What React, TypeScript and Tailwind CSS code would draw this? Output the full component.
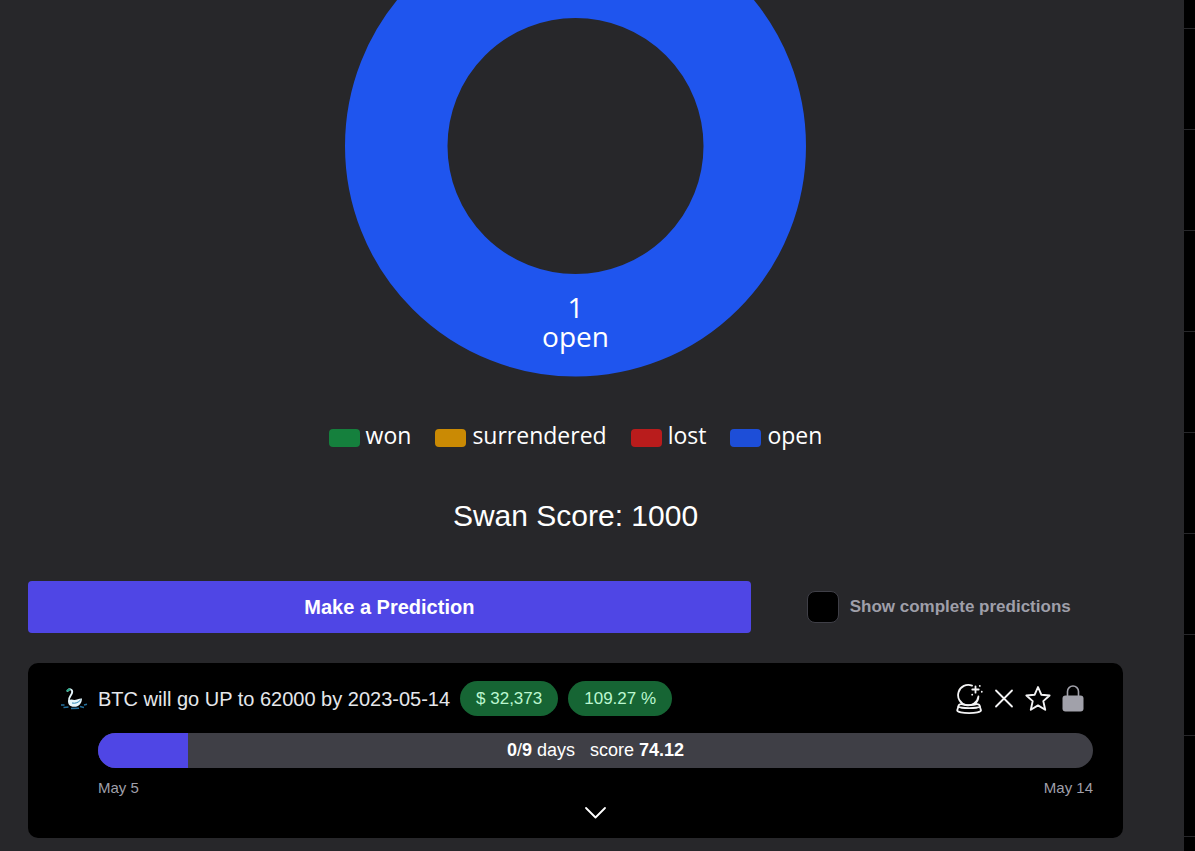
import { useState } from "react";

type Status = { label: string; color: string };

const STATUSES: Status[] = [
  { label: "won", color: "bg-[#15803d]" },
  { label: "surrendered", color: "bg-[#ca8a04]" },
  { label: "lost", color: "bg-[#b91c1c]" },
  { label: "open", color: "bg-[#1d4ed8]" }
];

const GRID_ROWS = [1, 2, 3, 4, 5, 6, 7, 8];

function StatusChart() {
  return (
    <svg viewBox="0 0 461 377" className="block w-[461px] text-[28px]" role="img" aria-label="1 open">
      <circle cx="230.5" cy="146" r="179.25" fill="none" stroke="#1f55ee" strokeWidth="102.5" />
      <text fill="#fff" textAnchor="middle" fontFamily="'Open Sans', 'Noto Sans', sans-serif">
        <tspan x="230.5" y="318">1</tspan>
        <tspan x="230.5" y="347">open</tspan>
      </text>
    </svg>
  );
}

function Legend() {
  return (
    <ul className="mt-10 flex justify-center gap-6 font-['Open_Sans','Noto_Sans',sans-serif] text-[23px] leading-9 text-white">
      {STATUSES.map((s) => (
        <li key={s.label} className="flex items-center gap-[6px]">
          <span className={`mt-[6px] h-[18px] w-[31px] rounded ${s.color}`} />
          {s.label}
        </li>
      ))}
    </ul>
  );
}

function SwanIcon() {
  return (
    <svg viewBox="0 0 28 24" className="h-6 w-7 shrink-0" fill="none" aria-hidden="true">
      <path d="M7.500 4C9.500.8 13 2.500 12 6c-.8 2.800-3.800 4.500-3 8" stroke="#e6f6fc" strokeWidth="1.900" strokeLinecap="round" />
      <path d="M8.200 13.500c1.800-1.300 4.300-1.200 6-.5 2.500-.2 5-1.800 7.800-1.500-.2 5-3 8.300-7.800 8.300-4.500 0-6.700-3-6-6.300z" fill="#e6f6fc" />
      <path d="M12 16c3.500.8 6.500-.6 8.500-3" stroke="#2c87b5" strokeWidth="1" />
      <path d="M6.800 4.200L10 1.800" stroke="#2aa88a" strokeWidth="2.200" />
      <path d="M1 18h3.500M3.500 20.500l5-.5M11 21.500l8-.2M20 19.500l4 1M24 18l3-.7" stroke="#246f9c" strokeWidth="1.400" />
    </svg>
  );
}

function CrystalBallIcon() {
  return (
    <svg viewBox="0 0 28 32" className="h-8 w-7" fill="none" stroke="#f4f4f5" strokeWidth="1.800" strokeLinecap="round" strokeLinejoin="round" aria-hidden="true">
      <path d="M17 2.600A10.200 10.200 0 1 0 23.400 13.500c0 3-1.200 5.200-3.600 7.400" />
      <path d="M6.500 21.200C4 21.200 3.500 22 3.400 23.500c2.800 2.200 18.600 2.200 21.400 0-.1-1.500-.6-2.300-3.100-2.300" />
      <path d="M3.400 23.500l-1.200 3.800c-.2 3.700 24 3.700 23.800 0l-1.200-3.800" />
      <path d="M6.500 21.200c3.500 1.200 11.700 1.200 15.200 0" />
      <path d="M20.500 3.300v6.400M17.300 6.500h6.400" />
      <path d="M24.800 2.800v.1M26.800 8.700v.1M17.200 11.600v.1" />
    </svg>
  );
}

function CloseIcon() {
  return (
    <svg viewBox="0 0 20 20" className="h-5 w-5" fill="none" stroke="#f4f4f5" strokeWidth="1.800" strokeLinecap="round" aria-hidden="true">
      <path d="M2 1.500l16 16M18 1.500l-16 16" />
    </svg>
  );
}

function StarIcon() {
  return (
    <svg viewBox="0 0 26 26" className="h-[26px] w-[26px]" fill="none" stroke="#f4f4f5" strokeWidth="1.900" strokeLinejoin="round" aria-hidden="true">
      <path d="M13 1l3.300 7.700 8.300.8-6.300 5.600 1.900 8.700L13 19.400l-7.200 4.400 1.900-8.700L1.400 9.500l8.300-.8z" />
    </svg>
  );
}

function LockIcon() {
  return (
    <svg viewBox="0 0 22 28" className="h-7 w-[22px]" aria-hidden="true">
      <path d="M5.500 12V6.500a5.500 5.500 0 0 1 11 0V12" fill="none" stroke="#a1a1aa" strokeWidth="1.600" />
      <rect x=".5" y="10.500" width="21" height="16" rx="3" fill="#a1a1aa" />
    </svg>
  );
}

function Badge({ children }: { children: string }) {
  return (
    <span className="ml-[10px] rounded-full bg-[#166534] px-4 text-[17px] leading-[35px] text-[#bbf7d0]">
      {children}
    </span>
  );
}

function PredictionCard({ progress }: { progress: number }) {
  return (
    <article className="mt-[30px] rounded-[10px] bg-black pt-[18px] pr-[30px] pb-4 pl-8">
      <div className="flex items-center">
        <SwanIcon />
        <h2 className="ml-[10px] text-[20px] text-gray-200">BTC will go UP to 62000 by 2023-05-14</h2>
        <Badge>$ 32,373</Badge>
        <Badge>109.27 %</Badge>
        <div className="mr-[9px] ml-auto flex items-center gap-[11px]">
          <button aria-label="Predict"><CrystalBallIcon /></button>
          <button aria-label="Surrender"><CloseIcon /></button>
          <button aria-label="Favourite"><StarIcon /></button>
          <button aria-label="Lock"><LockIcon /></button>
        </div>
      </div>

      <div className="mt-[17px] ml-[38px]">
        <div className="grid h-[35px] overflow-hidden rounded-full bg-[#3f3f46]">
          <div className="col-start-1 row-start-1 bg-[#4f46e5]" style={{ width: `${progress}%` }} />
          <p className="col-start-1 row-start-1 text-center text-[18px] leading-[35px] text-white">
            <b>0</b>/<b>9</b> days <span className="ml-[10px]">score <b>74.12</b></span>
          </p>
        </div>
        <div className="mt-[10px] flex justify-between text-[15px] leading-5 text-zinc-400">
          <span>May 5</span>
          <span>May 14</span>
        </div>
        <button aria-label="Show details" className="mx-auto block h-6">
          <svg viewBox="0 0 24 24" className="h-6 w-6" fill="none" stroke="#fff" strokeWidth="1.800" strokeLinecap="round" strokeLinejoin="round" aria-hidden="true">
            <path d="M2 10l9.500 9.500L21 10" />
          </svg>
        </button>
      </div>
    </article>
  );
}

export default function App() {
  const [showComplete, setShowComplete] = useState(false);

  return (
    <div className="flex h-screen overflow-hidden bg-black font-['Liberation_Sans',Arial,sans-serif]">
      <main className="min-w-0 flex-1 border-r border-zinc-800 bg-[#27272a] pr-[60px] pl-7">
        <div className="flex justify-center">
          <StatusChart />
        </div>
        <Legend />
        <p className="mt-[43px] text-center text-[30px] leading-10 text-white">Swan Score: 1000</p>

        <div className="mt-[45px] flex items-center">
          <button className="h-[52px] w-[66%] rounded bg-[#4f46e5] text-[20px] font-bold text-white">
            Make a Prediction
          </button>
          <label className="ml-14 flex items-center gap-[11px] text-[17px] font-bold text-zinc-400">
            <input
              type="checkbox"
              checked={showComplete}
              onChange={(e) => setShowComplete(e.target.checked)}
              className="h-8 w-8 appearance-none rounded-lg border border-zinc-700 bg-black checked:bg-[#4f46e5]"
            />
            Show complete predictions
          </label>
        </div>

        <PredictionCard progress={9} />
      </main>

      <aside className="w-[11px] shrink-0">
        <div className="h-[29px] border-b border-zinc-800" />
        {GRID_ROWS.map((row) => (
          <div key={row} className="h-[101px] border-b border-zinc-800" />
        ))}
      </aside>
    </div>
  );
}
